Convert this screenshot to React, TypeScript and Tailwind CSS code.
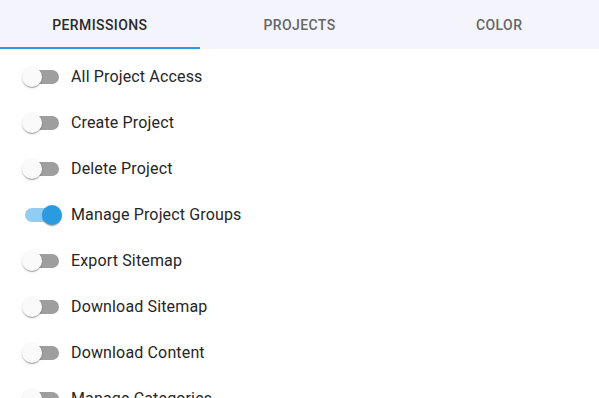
import { useState } from "react";

const TABS = ["Permissions", "Projects", "Color"];

const PERMS = [
  { label: "All Project Access", on: false },
  { label: "Create Project", on: false },
  { label: "Delete Project", on: false },
  { label: "Manage Project Groups", on: true },
  { label: "Export Sitemap", on: false },
  { label: "Download Sitemap", on: false },
  { label: "Download Content", on: false },
  { label: "Manage Categories", on: false },
];

const Toggle = ({ on, onClick }: { on: boolean; onClick: () => void }) => (
  <button onClick={onClick} className="relative w-[40px] h-[20px] shrink-0">
    <span
      className={`absolute left-[3px] top-[3px] w-[34px] h-[14px] rounded-full ${
        on ? "bg-[#92cdf1]" : "bg-[#9e9e9e]"
      }`}
    />
    <span
      className={`absolute top-0 w-[20px] h-[20px] rounded-full shadow-[0_2px_1px_-1px_rgba(0,0,0,0.2),0_1px_1px_0_rgba(0,0,0,0.14),0_1px_3px_0_rgba(0,0,0,0.12)] ${
        on ? "left-[20px] bg-[#2a9be0]" : "left-0 bg-[#fafafa]"
      }`}
    />
  </button>
);

export default function App() {
  const [tab, setTab] = useState(0);
  const [perms, setPerms] = useState(PERMS);

  return (
    <div className="w-[599px] h-[398px] overflow-hidden bg-white font-['Roboto',sans-serif]">
      {/* tabs */}
      <div className="flex h-[49px] bg-[#f4f5fc]">
        {TABS.map((t, i) => (
          <button
            key={t}
            onClick={() => setTab(i)}
            className={`relative flex-1 flex items-center justify-center pt-[2px] text-[14px] font-medium uppercase tracking-[0.4px] ${
              tab === i ? "text-[#2b2b2b]" : "text-[#666666]"
            }`}
          >
            {t}
            {tab === i && (
              <span className="absolute left-0 right-0 bottom-0 h-[2px] bg-[#2a9be0]" />
            )}
          </button>
        ))}
      </div>

      {/* list */}
      <div className="pt-[5px]">
        {perms.map((p, i) => (
          <div key={p.label} className="flex items-center h-[46px] pl-[22px] gap-[9px]">
            <Toggle
              on={p.on}
              onClick={() =>
                setPerms(perms.map((x, j) => (j === i ? { ...x, on: !x.on } : x)))
              }
            />
            <span className="text-[16px] tracking-[0.15px] text-[#262626]">{p.label}</span>
          </div>
        ))}
      </div>
    </div>
  );
}
